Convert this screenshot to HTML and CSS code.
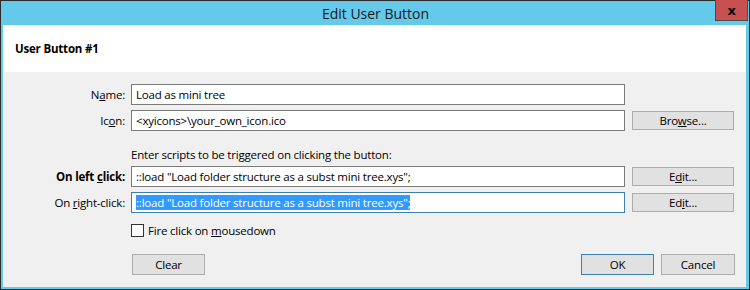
FILE: index.html
```html
<!DOCTYPE html>
<html lang="en">
<head>
    <meta charset="UTF-8">
    <title>Edit User Button</title>
    <link rel="stylesheet" href="styles.css">
</head>
<body>
    <div class="window">
        <div class="titlebar">
            <span class="title">Edit User Button</span>
            <div class="close">x</div>
        </div>

        <div class="header">User Button #1</div>

        <div class="content">
            <div class="form">
                <label class="label">N<u>a</u>me:</label>
                <div class="field">Load as mini tree</div>
                <div></div>

                <label class="label">Ic<u>o</u>n:</label>
                <div class="field">&lt;xyicons&gt;\your_own_icon.ico</div>
                <button class="btn">Bro<u>w</u>se...</button>

                <div></div>
                <div class="hint">Enter scripts to be triggered on clicking the button:</div>
                <div></div>

                <label class="label bold">On left <u>c</u>lick:</label>
                <div class="field">::load "Load folder structure as a subst mini tree.xys";</div>
                <button class="btn">E<u>d</u>it...</button>

                <label class="label">On <u>r</u>ight-click:</label>
                <div class="field focus"><span class="selected">::load "Load folder structure as a subst mini tree.xys";</span></div>
                <button class="btn">Ed<u>i</u>t...</button>

                <div></div>
                <div class="check">
                    <span class="box"></span>
                    <span>Fire click on <u>m</u>ousedown</span>
                </div>
                <div></div>
            </div>

            <div class="footer">
                <button class="btn wide">Clear</button>
                <div class="actions">
                    <button class="btn wide default">OK</button>
                    <button class="btn wide">Cancel</button>
                </div>
            </div>
        </div>
    </div>
</body>
</html>
```

FILE: styles.css
```css
body {
    margin: 0;
    font-family: "Segoe UI", "Open Sans", sans-serif;
    font-size: 11.5px;
    letter-spacing: -0.2px;
    color: #000;
}
.window {
    width: 750px;
    height: 290px;
    box-sizing: border-box;
    border: 1px solid #2b2b2b;
    background-color: #65c9ea;
    padding: 0 3px 2px 2px;
    display: flex;
    flex-direction: column;
}
.titlebar {
    position: relative;
    height: 24px;
    display: flex;
    justify-content: center;
    align-items: center;
}
.title {
    font-size: 14px;
    letter-spacing: 0;
    color: #1a1a1a;
    margin-left: 2px;
}
.close {
    position: absolute;
    top: -1px;
    right: -2px;
    width: 31px;
    height: 20px;
    background-color: #c75050;
    border: 1px solid #4a4a4a;
    border-top: none;
    display: flex;
    justify-content: center;
    align-items: center;
    font-family: "DejaVu Sans", sans-serif;
    font-weight: bold;
    font-size: 13px;
    line-height: 1;
}
.header {
    background-color: #fff;
    height: 47px;
    box-sizing: border-box;
    padding: 16px 0 0 12px;
    font-weight: bold;
}
.content {
    flex: 1;
    background-color: #f0f0f0;
    padding-top: 12px;
}
.form {
    display: grid;
    grid-template-columns: 122px 494px 103px;
    grid-template-rows: 21px 21px 25px 21px 21px 21px;
    column-gap: 6px;
    row-gap: 5px;
}
.form > :nth-child(3n) {
    margin-left: 1px;
}
.label {
    text-align: right;
    align-self: center;
}
.bold {
    font-weight: bold;
}
.field {
    box-sizing: border-box;
    border: 1px solid #7a7a7a;
    background-color: #fff;
    padding: 0 4px;
    display: flex;
    align-items: center;
    white-space: nowrap;
}
.field.focus {
    border-color: #3c7fb1;
}
.selected {
    background-color: #3399ff;
    color: #fff;
    line-height: 15px;
}
.hint {
    padding-top: 11px;
    line-height: 16px;
}
.check {
    display: flex;
    align-items: center;
    gap: 4px;
    align-self: start;
    margin-top: 5px;
}
.box {
    width: 11px;
    height: 11px;
    border: 1px solid #333;
    background-color: #fff;
}
.btn {
    font-family: inherit;
    font-size: 11.5px;
    letter-spacing: -0.2px;
    color: #000;
    background-color: #e1e1e1;
    border: 1px solid #adadad;
    height: 19px;
    padding: 0;
    align-self: center;
}
.wide {
    width: 73px;
    height: 21px;
}
.default {
    border-color: #3c7fb1;
}
.footer {
    display: flex;
    justify-content: space-between;
    padding: 15px 11px 0 129px;
}
.actions {
    display: flex;
    gap: 7px;
}
.actions .btn:last-child {
    width: 74px;
}
```
